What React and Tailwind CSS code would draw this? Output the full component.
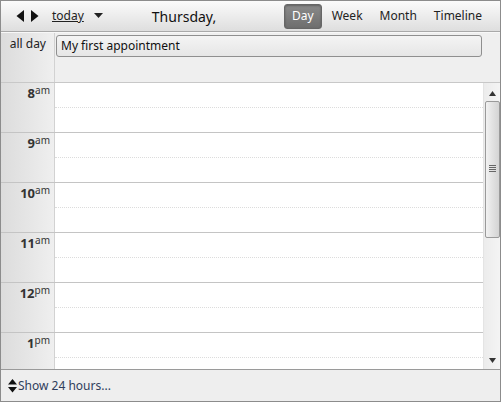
import React from 'react';

const hours = [
  { h: '8', s: 'am' },
  { h: '9', s: 'am' },
  { h: '10', s: 'am' },
  { h: '11', s: 'am' },
  { h: '12', s: 'pm' },
  { h: '1', s: 'pm' },
];

const App = () => {
  return (
    <div className="w-[501px] h-[402px] flex flex-col border border-[#8c8c8c] bg-[#efefef] overflow-hidden text-[12px] text-[#222]" style={{ fontFamily: '"Noto Sans", "Open Sans", sans-serif' }}>
      {/* TOOLBAR */}
      <div className="h-[31px] shrink-0 flex items-center bg-gradient-to-b from-[#fbfbfb] to-[#dedede] border-b border-[#a9a9a9] shadow-[0_1px_0_#f6f6f6]">
        <div className="flex items-center gap-[5px] ml-[15px]">
          <svg width="9" height="12" viewBox="0 0 9 12"><path d="M8 0 L8 12 L0.5 6 Z" fill="#111" /></svg>
          <svg width="9" height="12" viewBox="0 0 9 12"><path d="M1 0 L1 12 L8.5 6 Z" fill="#111" /></svg>
        </div>
        <span className="ml-[13px] underline text-[12px] text-[#222]">today</span>
        <svg className="ml-[10px]" width="9" height="6" viewBox="0 0 9 6"><path d="M0 0 L9 0 L4.5 5 Z" fill="#222" /></svg>
        <span className="ml-[49px] text-[14px] text-[#111]">Thursday,</span>
        <div className="ml-auto mr-[18px] flex items-center">
          <span className="px-[7px] h-[25px] flex items-center rounded-[3px] bg-gradient-to-b from-[#8a8a8a] to-[#6e6e6e] border border-[#666] text-white shadow-[inset_0_1px_2px_rgba(0,0,0,0.3)]">Day</span>
          <span className="ml-[10px]">Week</span>
          <span className="ml-[17px]">Month</span>
          <span className="ml-[17px]">Timeline</span>
        </div>
      </div>

      {/* ALL DAY */}
      <div className="h-[51px] shrink-0 flex border-t border-[#f8f8f8] border-b border-b-[#c8c8c8]">
        <div className="w-[54px] shrink-0 bg-gradient-to-r from-[#dcdcdc] to-[#efefef] border-r border-[#d2d2d2] text-right pr-[8px] pt-[2px] text-[#222]">all day</div>
        <div className="flex-1 pl-[1px] pr-[18px] pt-[2px]">
          <div className="h-[22px] rounded-[3px] border border-[#8f8f8f] bg-gradient-to-b from-[#f4f4f4] to-[#e6e6e6] px-[4px] flex items-center text-[#111]">My first appointment</div>
        </div>
      </div>

      {/* GRID */}
      <div className="flex-1 flex min-h-0">
        <div className="flex-1 flex flex-col overflow-hidden">
          {hours.map((x, i) => (
            <div key={i} className="h-[50px] shrink-0 flex border-b border-[#c4c4c4]">
              <div className="w-[54px] shrink-0 bg-gradient-to-r from-[#dcdcdc] to-[#efefef] border-r border-[#d2d2d2] text-right pr-[4px] pt-[1px]">
                <span className="text-[13px] font-bold text-[#333]">{x.h}</span>
                <span className="text-[10px] align-top relative top-[-1px] text-[#333]">{x.s}</span>
              </div>
              <div className="flex-1 bg-white flex flex-col">
                <div className="h-[25px] border-b border-dotted border-[#dcdcdc]"></div>
              </div>
            </div>
          ))}
        </div>
        {/* SCROLLBAR */}
        <div className="w-[17px] shrink-0 bg-gradient-to-r from-[#ececec] to-[#f4f4f4] border-l border-[#e4e4e4] flex flex-col items-center">
          <svg className="mt-[8px]" width="7" height="5" viewBox="0 0 7 5"><path d="M3.5 0 L7 5 L0 5 Z" fill="#333" /></svg>
          <div className="mt-[5px] w-[15px] h-[137px] rounded-[2px] border border-[#9a9a9a] bg-gradient-to-r from-[#f2f2f2] via-[#e2e2e2] to-[#d4d4d4] flex items-center justify-center">
            <div className="flex flex-col gap-[1px] mt-[-2px]">
              <div className="w-[7px] h-[1px] bg-[#666]"></div>
              <div className="w-[7px] h-[1px] bg-[#666]"></div>
              <div className="w-[7px] h-[1px] bg-[#666]"></div>
              <div className="w-[7px] h-[1px] bg-[#666]"></div>
            </div>
          </div>
          <div className="flex-1"></div>
          <svg className="mb-[6px]" width="7" height="5" viewBox="0 0 7 5"><path d="M0 0 L7 0 L3.5 5 Z" fill="#333" /></svg>
        </div>
      </div>

      {/* FOOTER */}
      <div className="h-[32px] shrink-0 border-t border-[#9a9a9a] bg-[#eeeeee] flex items-center pl-[7px]">
        <svg width="9" height="14" viewBox="0 0 9 14"><path d="M4.5 0 L9 5.5 L0 5.5 Z M0 8 L9 8 L4.5 13.5 Z" fill="#111" /></svg>
        <span className="ml-[1px] text-[#2e3d5c]">Show 24 hours...</span>
      </div>
    </div>
  );
};

export default App;
